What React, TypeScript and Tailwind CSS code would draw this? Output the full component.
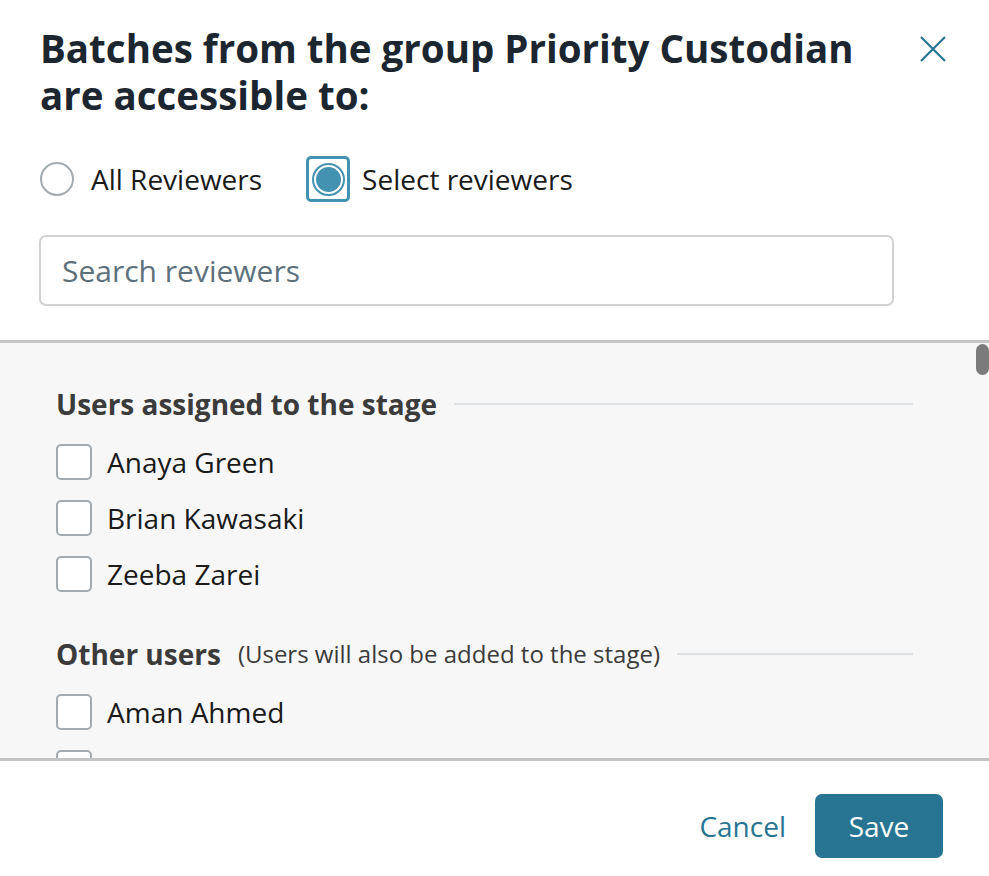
import React, { useState } from "react";

const assigned = ["Anaya Green", "Brian Kawasaki", "Zeeba Zarei"];
const others = ["Aman Ahmed", "Brooke Lindqvist"];

function Checkbox({ label }: { label: string }) {
  const [checked, setChecked] = useState(false);
  return (
    <label className="flex items-center h-[56px] cursor-pointer">
      <span
        onClick={() => setChecked(!checked)}
        className={`w-[36px] h-[36px] rounded-[5px] border-2 border-[#a3abb0] shrink-0 ${
          checked ? "bg-[#277592]" : "bg-white"
        }`}
      />
      <span className="ml-[15px] text-[28px] text-[#1a1a1a]">{label}</span>
    </label>
  );
}

function SectionHeading({ title, note }: { title: string; note?: string }) {
  return (
    <div className="flex items-center h-[40px]">
      <span className="text-[28px] font-bold text-[#3b3b3b]">{title}</span>
      {note && <span className="ml-[17px] text-[24px] text-[#3b3b3b]">{note}</span>}
      <div className="flex-1 h-[2px] bg-[#dde1e4] ml-[17px]" />
    </div>
  );
}

export default function App() {
  const [mode, setMode] = useState<"all" | "select">("select");

  return (
    <div
      className="w-[989px] h-[876px] bg-white flex flex-col overflow-hidden"
      style={{ fontFamily: '"Open Sans", "Noto Sans", sans-serif' }}
    >
      {/* header */}
      <div className="flex items-start justify-between pl-[40px] pr-[40px] pt-[25px]">
        <h2 className="text-[38.5px] leading-[47px] font-bold text-[#1c2630] w-[840px]">
          Batches from the group Priority Custodian are accessible to:
        </h2>
        <button className="mt-[10px] mr-[2px] text-[#277592]">
          <svg width="28" height="28" viewBox="0 0 28 28" fill="none" stroke="currentColor" strokeWidth="2.2">
            <path d="M2 2 L26 26 M26 2 L2 26" />
          </svg>
        </button>
      </div>

      {/* radios */}
      <div className="flex items-center pl-[40px] mt-[37px] h-[46px]">
        <label className="flex items-center cursor-pointer" onClick={() => setMode("all")}>
          <span className="w-[34px] h-[34px] rounded-full border-2 border-[#a3abb0] bg-white flex items-center justify-center">
            {mode === "all" && <span className="w-[22px] h-[22px] rounded-full bg-[#4392b2]" />}
          </span>
          <span className="ml-[17px] text-[28px] text-[#1a1a1a]">All Reviewers</span>
        </label>
        <label className="flex items-center ml-[44px] cursor-pointer" onClick={() => setMode("select")}>
          <span className="w-[44px] h-[46px] rounded-[5px] border-[3px] border-[#4392b2] flex items-center justify-center">
            <span className="w-[33px] h-[33px] rounded-full border-2 border-[#4392b2] bg-white flex items-center justify-center">
              {mode === "select" && <span className="w-[25px] h-[25px] rounded-full bg-[#4392b2]" />}
            </span>
          </span>
          <span className="ml-[12px] text-[28px] text-[#1a1a1a]">Select reviewers</span>
        </label>
      </div>

      {/* search */}
      <div className="pl-[39px] pr-[95px] mt-[33px]">
        <input
          type="text"
          placeholder="Search reviewers"
          className="w-full h-[71px] rounded-[7px] border-2 border-[#d2d2d2] px-[21px] text-[30px] text-[#1a1a1a] placeholder:text-[#5d707c] outline-none"
        />
      </div>

      {/* list */}
      <div className="relative mt-[34px] h-[421px] bg-[#f7f7f7] border-t-[3px] border-b-[3px] border-[#c4c4c6] overflow-hidden">
        <div className="pl-[56px] pr-[76px] pt-[41px]">
          <SectionHeading title="Users assigned to the stage" />
          <div className="mt-[10px]">
            {assigned.map((name) => (
              <Checkbox key={name} label={name} />
            ))}
          </div>
          <div className="mt-[32px]">
            <SectionHeading title="Other users" note="(Users will also be added to the stage)" />
          </div>
          <div className="mt-[10px]">
            {others.map((name) => (
              <Checkbox key={name} label={name} />
            ))}
          </div>
        </div>
        <div className="absolute right-0 top-[1px] w-[13px] h-[31px] rounded-[7px] bg-[#7b7b7b]" />
      </div>

      {/* footer */}
      <div className="flex items-center justify-end pr-[46px] pt-[33px]">
        <button className="text-[28px] text-[#277592] mr-[29px]">Cancel</button>
        <button className="w-[128px] h-[64px] rounded-[7px] bg-[#277592] text-white text-[28px]">Save</button>
      </div>
    </div>
  );
}
